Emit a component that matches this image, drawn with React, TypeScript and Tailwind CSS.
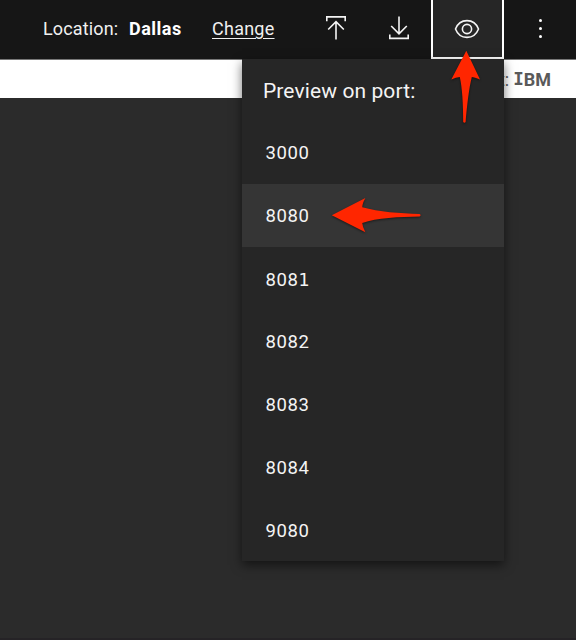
import React from "react";

const ports = ["3000", "8080", "8081", "8082", "8083", "8084", "9080"];

function UploadIcon() {
  return (
    <svg width="22" height="26" viewBox="0 0 22 26" fill="none" stroke="#f4f4f4" strokeWidth="1.6">
      <path d="M1.8 6.2V1.9h18.4v4.3M11 24.6V6.7M3.2 14.5 11 6.6l7.8 7.9" />
    </svg>
  );
}

function DownloadIcon() {
  return (
    <svg width="22" height="26" viewBox="0 0 22 26" fill="none" stroke="#f4f4f4" strokeWidth="1.6">
      <path d="M1.8 19.6V23.4h18.4v-3.8M11 1.5V18.8M3.2 11 11 18.9l7.8-7.9" />
    </svg>
  );
}

function EyeIcon() {
  return (
    <svg width="26" height="20" viewBox="0 0 26 20" fill="none" stroke="#f4f4f4" strokeWidth="1.6">
      <path d="M1.5 10C3.5 4.8 8 1.6 13 1.6S22.5 4.8 24.5 10C22.5 15.2 18 18.4 13 18.4S3.5 15.2 1.5 10Z" />
      <circle cx="13" cy="10" r="4.6" />
    </svg>
  );
}

function Header() {
  return (
    <header className="flex h-[59px] items-center bg-[#161616] text-[18px] leading-[24px] text-[#f0f0f0]">
      <span className="mb-[2px] ml-[43px] w-[86px] tracking-[0.15px]">Location:</span>
      <span className="mb-[2px] w-[83px] font-bold tracking-[0.5px] text-white">Dallas</span>
      <a className="mb-[2px] w-[113.3px] tracking-[0.25px] underline decoration-1 underline-offset-[3px]">Change</a>
      <span className="mb-[4px] w-[63px]"><UploadIcon /></span>
      <span className="mb-[4px] w-[42.7px]"><DownloadIcon /></span>
      <button className="flex h-[59px] w-[73px] items-center justify-center border-x-[2.5px] border-b-2 border-white bg-[#262626] pr-[1px]">
        <EyeIcon />
      </button>
      <span className="mb-[2px] ml-[35px] flex flex-col gap-[5px]">
        <i className="size-[3.2px] rounded-full bg-white" />
        <i className="size-[3.2px] rounded-full bg-white" />
        <i className="size-[3.2px] rounded-full bg-white" />
      </span>
    </header>
  );
}

function PortMenu() {
  return (
    <div className="absolute left-[242px] top-[59px] w-[262px] bg-[#262626] text-[#f4f4f4] shadow-[0_4px_10px_rgba(0,0,0,0.55)]">
      <div className="h-[62.4px] pl-[21px] pt-[17px] text-[21px] leading-[30px] tracking-[0.1px]">Preview on port:</div>
      {ports.map((port) => (
        <div
          key={port}
          className={`flex h-[62.85px] items-center pl-[23.5px] pt-[3px] text-[18.5px] tracking-[0.6px] ${port === "8080" ? "bg-[#353535]" : ""}`}
        >
          {port === "8081" ? <span className="leading-[22px]">808<span className="font-['DejaVu_Sans'] text-[17.5px] leading-none tracking-normal">1</span></span> : port}
        </div>
      ))}
    </div>
  );
}

function Arrow({ className, points }: { className: string; points: string }) {
  return (
    <svg className={`absolute drop-shadow-[0_1px_1px_rgba(0,0,0,0.5)] ${className}`} fill="#ff2600">
      <path d={points} />
    </svg>
  );
}

export default function App() {
  return (
    <div className="relative h-[640px] w-[576px] overflow-hidden bg-[#2b2b2b] font-['Roboto','Liberation_Sans',sans-serif]">
      <Header />
      <div className="flex h-[39px] items-center justify-end border-t border-[#777] bg-white pr-[25px] text-[18px] text-[#5a5a5a]">
        <span className="mr-[4px]">Account:</span>
        <span className="flex items-center font-bold">
          <span className="font-['DejaVu_Sans_Mono'] text-[17.5px]">I</span>BM
        </span>
      </div>
      <PortMenu />
      <Arrow className="left-[450px] top-[50px] h-[76px] w-[32px]" points="M16.3 .7 30 29.6Q24.5 27.2 21.8 27.1C19 38 17 56 15.6 72Q14.5 73.5 13.2 72C13.2 54 12.2 38 9.8 27.1Q6 27.2 1.3 29.6Z" />
      <Arrow className="left-[331px] top-[197px] h-[38px] w-[92px]" points="M.8 18.2 34.4 1Q31.3 6.5 31.2 10.3C48 15 69 16.4 88.5 17.1Q90.8 18.2 88.5 19.4C68 19.7 46 20.6 31.2 26.1Q31.5 30 34.4 35.2Z" />
      <div className="absolute bottom-0 h-[2px] w-full bg-[#252326]" />
    </div>
  );
}
